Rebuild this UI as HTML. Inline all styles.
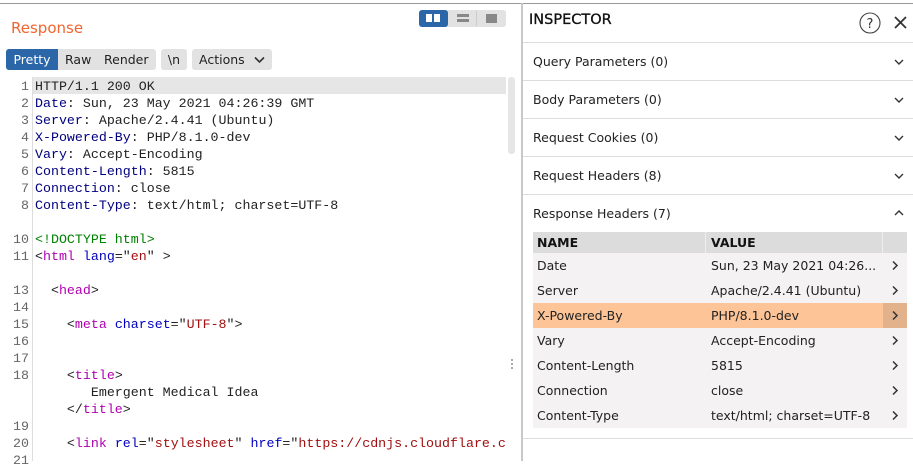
<!DOCTYPE html>
<html><head><style>
body{margin:0;width:913px;height:461px;overflow:hidden;background:#fff;font-family:"DejaVu Sans",sans-serif;position:relative}
.abs{position:absolute}
.ln{position:absolute;left:0;width:29px;text-align:right;color:#666;font-family:"Liberation Mono",monospace;font-size:13.3px}
.cl{position:absolute;left:35px;white-space:pre;font-family:"Liberation Mono",monospace;font-size:13.3px;color:#222}
.k{color:#000080}.t{color:#b000b0}.a{color:#0000c0}.s{color:#a01010}.g{color:#008000}
.row{position:absolute;left:523px;width:390px;height:37px;border-bottom:1px solid #ddd;font-size:12.5px;color:#222}
.row span{position:absolute;left:10px;top:11px}
.chev{position:absolute;right:8px;top:10px}
.tr{position:absolute;left:533px;width:374px;height:25px;background:#f4f2f3;font-size:12.5px;color:#222}
.tr .n{position:absolute;left:4px;top:5px}.tr .v{position:absolute;left:178px;top:5px}
.tr .c{position:absolute;left:350px;top:0;width:24px;height:25px}
</style></head><body>
<div class="abs" style="left:0;top:3px;width:913px;height:1px;background:#999"></div>
<div class="abs" style="left:11px;top:19px;color:#f26430;font-size:15px;">Response</div>
<div class="abs" style="left:419px;top:10px;width:87px;height:17px;background:#e2e2e2;border-radius:3px"></div>
<div class="abs" style="left:419px;top:10px;width:29px;height:17px;background:#2b66a8;border-radius:3px"></div>
<div class="abs" style="left:426px;top:14px;width:6px;height:8px;background:#fff"></div>
<div class="abs" style="left:434px;top:14px;width:6px;height:8px;background:#fff"></div>
<div class="abs" style="left:457px;top:14px;width:12px;height:3px;background:#888"></div>
<div class="abs" style="left:457px;top:19px;width:12px;height:3px;background:#888"></div>
<div class="abs" style="left:476px;top:11px;width:1px;height:15px;background:#ccc"></div>
<div class="abs" style="left:486px;top:14px;width:11px;height:9px;background:#888"></div>
<div class="abs" style="left:6px;top:49px;width:150px;height:21px;background:#e2e2e2;border-radius:3px"></div>
<div class="abs" style="left:6px;top:49px;width:52px;height:21px;background:#2b66a8;border-radius:3px 0 0 3px;color:#fff;font-size:12.5px;line-height:21px;text-align:center">Pretty</div>
<div class="abs" style="left:65px;top:49px;font-size:12.5px;line-height:21px;color:#222">Raw</div>
<div class="abs" style="left:104px;top:49px;font-size:12.5px;line-height:21px;color:#222">Render</div>
<div class="abs" style="left:161px;top:49px;width:26px;height:21px;background:#e2e2e2;border-radius:3px;font-size:12.5px;line-height:21px;text-align:center;color:#222">\n</div>
<div class="abs" style="left:192px;top:49px;width:80px;height:21px;background:#e2e2e2;border-radius:3px;font-size:12.5px;line-height:21px;color:#222"><span style="position:absolute;left:7px">Actions</span><svg class="abs" style="left:62px;top:7px" width="11" height="8"><path d="M1 1.5l4.5 4.5 4.5-4.5" stroke="#333" stroke-width="1.6" fill="none"/></svg></div>
<div class="abs" style="left:32px;top:77px;width:1px;height:384px;background:#ddd"></div>
<div class="abs" style="left:33px;top:77px;width:473px;height:17px;background:#e6e6e6"></div>
<div class="abs" style="left:508px;top:77px;width:7px;height:77px;background:#e6e6e6;border-radius:3px"></div>
<div class="abs" style="left:521px;top:3px;width:2px;height:458px;background:#c8c8c8"></div>
<div class="abs" style="left:511px;top:359px;width:2px;height:2px;background:#aaa;box-shadow:0 4px #aaa,0 8px #aaa"></div>

<div class="abs" style="left:0;top:78px;width:515px;line-height:17px">
<div style="position:relative;height:17px"><span class="ln">1</span><span class="cl">HTTP/1.1 200 OK</span></div>
<div style="position:relative;height:17px"><span class="ln">2</span><span class="cl"><span class="k">Date</span>: Sun, 23 May 2021 04:26:39 GMT</span></div>
<div style="position:relative;height:17px"><span class="ln">3</span><span class="cl"><span class="k">Server</span>: Apache/2.4.41 (Ubuntu)</span></div>
<div style="position:relative;height:17px"><span class="ln">4</span><span class="cl"><span class="k">X-Powered-By</span>: PHP/8.1.0-dev</span></div>
<div style="position:relative;height:17px"><span class="ln">5</span><span class="cl"><span class="k">Vary</span>: Accept-Encoding</span></div>
<div style="position:relative;height:17px"><span class="ln">6</span><span class="cl"><span class="k">Content-Length</span>: 5815</span></div>
<div style="position:relative;height:17px"><span class="ln">7</span><span class="cl"><span class="k">Connection</span>: close</span></div>
<div style="position:relative;height:17px"><span class="ln">8</span><span class="cl"><span class="k">Content-Type</span>: text/html; charset=UTF-8</span></div>
<div style="position:relative;height:17px"></div>
<div style="position:relative;height:17px"><span class="ln">10</span><span class="cl g">&lt;!DOCTYPE html&gt;</span></div>
<div style="position:relative;height:17px"><span class="ln">11</span><span class="cl">&lt;<span class="t">html</span> <span class="a">lang</span>="<span class="s">en</span>" &gt;</span></div>
<div style="position:relative;height:17px"></div>
<div style="position:relative;height:17px"><span class="ln">13</span><span class="cl">  &lt;<span class="t">head</span>&gt;</span></div>
<div style="position:relative;height:17px"><span class="ln">14</span></div>
<div style="position:relative;height:17px"><span class="ln">15</span><span class="cl">    &lt;<span class="t">meta</span> <span class="a">charset</span>="<span class="s">UTF-8</span>"&gt;</span></div>
<div style="position:relative;height:17px"><span class="ln">16</span></div>
<div style="position:relative;height:17px"><span class="ln">17</span></div>
<div style="position:relative;height:17px"><span class="ln">18</span><span class="cl">    &lt;<span class="t">title</span>&gt;</span></div>
<div style="position:relative;height:17px"><span class="cl">       Emergent Medical Idea</span></div>
<div style="position:relative;height:17px"><span class="cl">    &lt;/<span class="t">title</span>&gt;</span></div>
<div style="position:relative;height:17px"><span class="ln">19</span></div>
<div style="position:relative;height:17px"><span class="ln">20</span><span class="cl">    &lt;<span class="t">link</span> <span class="a">rel</span>="<span class="s">stylesheet</span>" <span class="a">href</span>="<span class="s">https://cdnjs.cloudflare.c</span></span></div>
<div style="position:relative;height:17px"><span class="ln">21</span></div>
</div>

<div class="abs" style="left:529px;top:12px;font-size:14.5px;color:#111;-webkit-text-stroke:0.3px #111">INSPECTOR</div>
<svg class="abs" style="left:858px;top:11px" width="24" height="24"><circle cx="12" cy="12" r="10" stroke="#444" stroke-width="1.1" fill="none"/><text x="12" y="17" text-anchor="middle" font-size="13" font-family="DejaVu Sans" fill="#333">?</text></svg>
<svg class="abs" style="left:893px;top:15px" width="15" height="15"><path d="M2 2L13 13M13 2L2 13" stroke="#333" stroke-width="1.8"/></svg>
<div class="abs" style="left:523px;top:42px;width:390px;height:1px;background:#ddd"></div>
<div class="row" style="top:43px"><span>Query Parameters (0)</span><svg class="chev" width="12" height="12" style="top:13px"><path d="M2 4l4 4 4-4" stroke="#333" stroke-width="1.4" fill="none"/></svg></div>
<div class="row" style="top:81px"><span>Body Parameters (0)</span><svg class="chev" width="12" height="12" style="top:13px"><path d="M2 4l4 4 4-4" stroke="#333" stroke-width="1.4" fill="none"/></svg></div>
<div class="row" style="top:119px"><span>Request Cookies (0)</span><svg class="chev" width="12" height="12" style="top:13px"><path d="M2 4l4 4 4-4" stroke="#333" stroke-width="1.4" fill="none"/></svg></div>
<div class="row" style="top:157px"><span>Request Headers (8)</span><svg class="chev" width="12" height="12" style="top:13px"><path d="M2 4l4 4 4-4" stroke="#333" stroke-width="1.4" fill="none"/></svg></div>
<div class="row" style="top:195px;height:243px"><span>Response Headers (7)</span><svg class="chev" width="12" height="12" style="top:12px"><path d="M2 8l4-4 4 4" stroke="#333" stroke-width="1.4" fill="none"/></svg></div>
<div class="abs" style="left:533px;top:232px;width:374px;height:21px;background:#dcdcdc;font-size:12.5px;font-weight:bold;color:#111">
<span class="abs" style="left:4px;top:3px">NAME</span><span class="abs" style="left:178px;top:3px">VALUE</span>
<div class="abs" style="left:172px;top:0;width:1px;height:21px;background:#eee"></div><div class="abs" style="left:349px;top:0;width:1px;height:21px;background:#eee"></div></div>
<div class="tr" style="top:253px"><span class="n">Date</span><span class="v">Sun, 23 May 2021 04:26...</span><svg class="c" viewBox="0 0 24 25"><path d="M10 8.5l4 4-4 4" stroke="#333" stroke-width="1.5" fill="none"/></svg></div>
<div class="tr" style="top:278px"><span class="n">Server</span><span class="v">Apache/2.4.41 (Ubuntu)</span><svg class="c" viewBox="0 0 24 25"><path d="M10 8.5l4 4-4 4" stroke="#333" stroke-width="1.5" fill="none"/></svg></div>
<div class="tr" style="top:303px;background:#fdc597"><span class="n">X-Powered-By</span><span class="v">PHP/8.1.0-dev</span><svg class="c" viewBox="0 0 24 25" style="background:#e2b28c"><path d="M10 8.5l4 4-4 4" stroke="#333" stroke-width="1.5" fill="none"/></svg></div>
<div class="tr" style="top:328px"><span class="n">Vary</span><span class="v">Accept-Encoding</span><svg class="c" viewBox="0 0 24 25"><path d="M10 8.5l4 4-4 4" stroke="#333" stroke-width="1.5" fill="none"/></svg></div>
<div class="tr" style="top:353px"><span class="n">Content-Length</span><span class="v">5815</span><svg class="c" viewBox="0 0 24 25"><path d="M10 8.5l4 4-4 4" stroke="#333" stroke-width="1.5" fill="none"/></svg></div>
<div class="tr" style="top:378px"><span class="n">Connection</span><span class="v">close</span><svg class="c" viewBox="0 0 24 25"><path d="M10 8.5l4 4-4 4" stroke="#333" stroke-width="1.5" fill="none"/></svg></div>
<div class="tr" style="top:403px"><span class="n">Content-Type</span><span class="v">text/html; charset=UTF-8</span><svg class="c" viewBox="0 0 24 25"><path d="M10 8.5l4 4-4 4" stroke="#333" stroke-width="1.5" fill="none"/></svg></div>
</body></html>
